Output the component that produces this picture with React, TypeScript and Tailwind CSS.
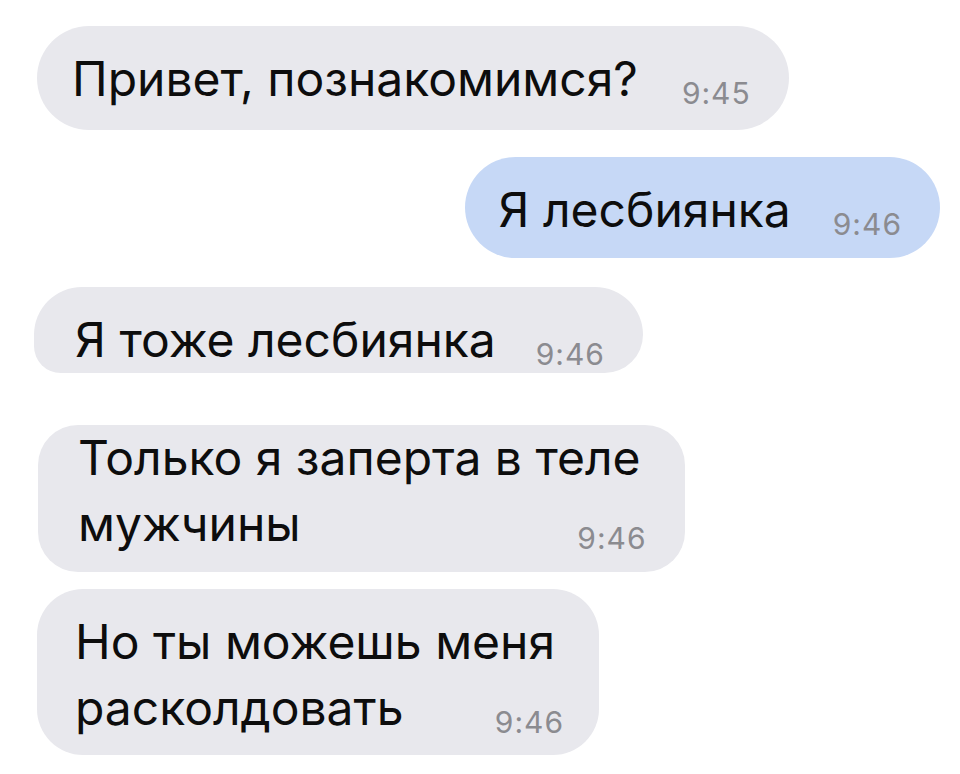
const font = { fontFamily: 'Inter, "Noto Sans", sans-serif' };

function Time({ children }: { children: string }) {
  return (
    <span className="text-[30px] leading-[30px] text-[#8b8b90] tracking-[1px] mb-[4px] whitespace-nowrap">
      {children}
    </span>
  );
}

export default function App() {
  return (
    <div className="w-[960px] h-[774px] bg-white overflow-hidden text-[#0d0d0d] pt-[26px]" style={font}>
      {/* incoming */}
      <div className="ml-[37px] inline-flex items-end gap-[44px] bg-[#e8e8ed] rounded-[52px] pl-[35px] pr-[38px] pt-[20px] pb-[18px]">
        <span className="text-[48px] leading-[66px] whitespace-nowrap">Привет, познакомимся?</span>
        <Time>9:45</Time>
      </div>

      {/* outgoing */}
      <div className="flex justify-end pr-[20px] mt-[27px]">
        <div className="inline-flex items-end gap-[42px] bg-[#c6d8f6] rounded-[52px] pl-[34px] pr-[38px] pt-[20px] pb-[15px]">
          <span className="text-[48px] leading-[66px] whitespace-nowrap">Я лесбиянка</span>
          <Time>9:46</Time>
        </div>
      </div>

      <div className="mt-[29px]">
        <div className="ml-[34px] inline-flex items-end gap-[40px] bg-[#e8e8ed] rounded-tl-[50px] rounded-tr-[50px] rounded-bl-[28px] rounded-br-[40px] pl-[41px] pr-[38px] pt-[20px]">
          <span className="text-[48px] leading-[66px] whitespace-nowrap">Я тоже лесбиянка</span>
          <Time>9:46</Time>
        </div>
      </div>

      <div className="mt-[52px]">
        <div className="ml-[38px] inline-grid bg-[#e8e8ed] rounded-[40px] pl-[40px] pr-[38px] pb-[15px]">
          <span className="[grid-area:1/1] text-[48px] leading-[66px] whitespace-nowrap pr-[6px]">
            Только я заперта в теле
            <br />
            мужчины
          </span>
          <span className="[grid-area:1/1] self-end justify-self-end flex">
            <Time>9:46</Time>
          </span>
        </div>
      </div>

      <div className="mt-[17px]">
        <div className="ml-[37px] inline-grid bg-[#e8e8ed] rounded-[46px] pl-[38px] pr-[35px] pt-[20px] pb-[14px]">
          <span className="[grid-area:1/1] text-[48px] leading-[66px] whitespace-nowrap pr-[9px]">
            Но ты можешь меня
            <br />
            расколдовать
          </span>
          <span className="[grid-area:1/1] self-end justify-self-end flex">
            <Time>9:46</Time>
          </span>
        </div>
      </div>
    </div>
  );
}
